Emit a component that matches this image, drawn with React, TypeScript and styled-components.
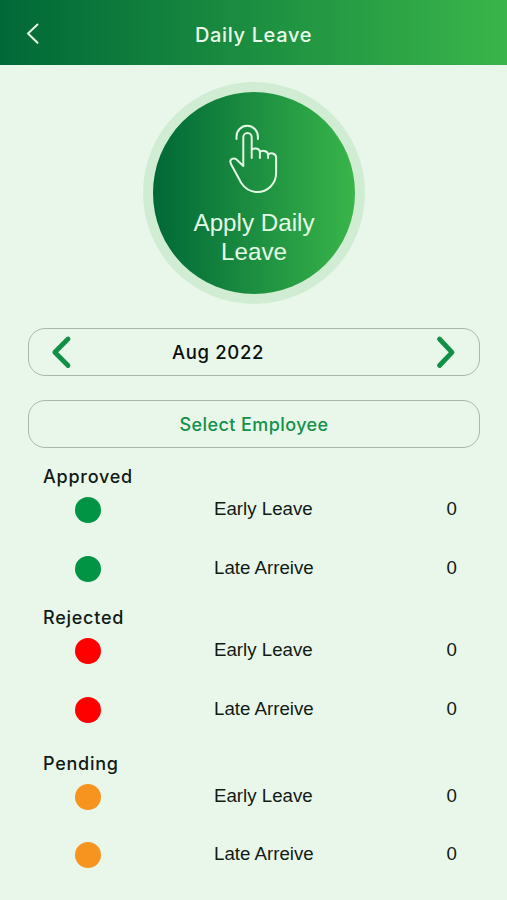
import React from "react";
import styled, { createGlobalStyle } from "styled-components";

const GlobalStyle = createGlobalStyle`
  * { box-sizing: border-box; }
  body { margin: 0; background: #e9f7eb; }
  button { appearance: none; background: none; border: 0; padding: 0; margin: 0; color: inherit; font: inherit; cursor: pointer; }
`;

const brandFont = `Inter, "Noto Sans", sans-serif`;
const bodyFont = `"Liberation Sans", Arial, sans-serif`;

const Screen = styled.main`
  width: 507px;
  height: 900px;
  overflow: hidden;
  display: flex;
  flex-direction: column;
  background: #e9f7eb;
  color: #111a14;
  font-family: ${bodyFont};
`;

const Header = styled.header`
  flex: none;
  height: 65px;
  padding: 3px 26px 0;
  display: grid;
  grid-template-columns: 40px 1fr 40px;
  align-items: center;
  background: linear-gradient(90deg, #006837 0%, #39b54a 100%);
  color: #e9fbe9;
`;

const BackButton = styled.button`
  display: flex;
`;

const Title = styled.h1`
  margin: 0;
  padding-top: 1px;
  text-align: center;
  font: 500 20px/24px ${brandFont};
  letter-spacing: 0.65px;
`;

const ApplyButton = styled.button`
  flex: none;
  align-self: center;
  width: 222px;
  height: 222px;
  margin-top: 17px;
  border-radius: 50%;
  padding: 10px;
  background: #d0edd3;
`;

const ApplyDisc = styled.span`
  width: 100%;
  height: 100%;
  border-radius: 50%;
  padding: 32px 0 0 1px;
  display: flex;
  flex-direction: column;
  align-items: center;
  background: linear-gradient(90deg, #006837 0%, #39b54a 100%);
  color: #e4fbe5;
`;

const ApplyLabel = styled.span`
  width: 140px;
  margin-top: 12px;
  font: 24.2px/29px ${bodyFont};
  text-align: center;
`;

const Controls = styled.section`
  flex: none;
  margin: 24px 27px 0 28px;
  display: flex;
  flex-direction: column;
  gap: 24px;
`;

const MonthPicker = styled.div`
  height: 48px;
  padding: 0 21px;
  display: grid;
  grid-template-columns: 22px 1fr 22px;
  align-items: center;
  border: 1px solid #a9b8ac;
  border-radius: 17px;
  color: #119148;
`;

const ArrowButton = styled.button`
  display: flex;
`;

const Month = styled.span`
  padding-left: 100px;
  color: #0b0f0c;
  font: 500 18.5px/24px ${brandFont};
  letter-spacing: 0.65px;
`;

const EmployeeButton = styled.button`
  height: 48px;
  padding-top: 1px;
  border: 1px solid #a9b8ac;
  border-radius: 17px;
  color: #139149;
  font: 500 18px/24px ${brandFont};
  letter-spacing: 0.42px;
`;

const Summary = styled.section`
  padding: 17.4px 50px 0 43px;
  display: flex;
  flex-direction: column;
`;

const Group = styled.section<{ $gap: number }>`
  margin-bottom: ${({ $gap }) => $gap}px;
`;

const GroupTitle = styled.h2`
  margin: 0;
  height: 32px;
  font: 500 18px/24px ${brandFont};
  letter-spacing: 0.75px;
`;

const Rows = styled.div`
  display: grid;
  gap: 32.4px;
`;

const Row = styled.div`
  height: 26px;
  padding-left: 32px;
  display: grid;
  grid-template-columns: 139px 1fr auto;
  align-items: center;
  font-size: 18.7px;
  line-height: 22px;
`;

const Dot = styled.span<{ $color: string }>`
  width: 26px;
  height: 26px;
  border-radius: 50%;
  background: ${({ $color }) => $color};
`;

const Value = styled.span`
  padding-bottom: 2px;
`;

function TapIcon() {
  return (
    <svg width="50" height="72" viewBox="0 0 50 72" fill="none" stroke="currentColor" strokeWidth="2" strokeLinecap="round" strokeLinejoin="round">
      <path d="M7.5 15V12.5a10.7 10.7 0 0 1 21.4 0V15" />
      <path d="M14.3 42V13.2a4.2 4.2 0 0 1 8.4 0V34M22.7 26c1-2 8-2.500 8.200 2.200V34M30.900 28.200c1.200-2 8-2 8.200 2.400V34M39.100 30.600c2-2.400 8-1.700 8 3V49c0 10.500-8.200 19-19 19-6.500-.2-12-3.200-15.800-9L2.200 40.500C-1 34.500 5.500 33 8.300 36.200L14.300 42" />
    </svg>
  );
}

function Chevron({ next = false }: { next?: boolean }) {
  return (
    <svg width="22" height="34" viewBox="0 0 22 34" fill="none" stroke="currentColor" strokeWidth="4.800" strokeLinecap="round" strokeLinejoin="round">
      <path d={next ? "M3.500 4 16 17.300 3.500 30.500" : "M18 4 4.800 17.300 18 30.500"} />
    </svg>
  );
}

const groups = [
  { title: "Approved", color: "#009444", gap: 24.6, early: 0, late: 0 },
  { title: "Rejected", color: "#fe0000", gap: 28.8, early: 0, late: 0 },
  { title: "Pending", color: "#f7941f", gap: 0, early: 0, late: 0 },
];

export default function App() {
  return (
    <Screen>
      <GlobalStyle />
      <Header>
        <BackButton aria-label="Back">
          <svg width="14" height="22" viewBox="0 0 14 22" fill="none" stroke="currentColor" strokeWidth="2" strokeLinecap="round" strokeLinejoin="round">
            <path d="M11.500 1.500 2 10.500 11.500 19.800" />
          </svg>
        </BackButton>
        <Title>Daily Leave</Title>
      </Header>
      <ApplyButton>
        <ApplyDisc>
          <TapIcon />
          <ApplyLabel>Apply Daily Leave</ApplyLabel>
        </ApplyDisc>
      </ApplyButton>
      <Controls>
        <MonthPicker>
          <ArrowButton aria-label="Previous month"><Chevron /></ArrowButton>
          <Month>Aug 2022</Month>
          <ArrowButton aria-label="Next month"><Chevron next /></ArrowButton>
        </MonthPicker>
        <EmployeeButton>Select Employee</EmployeeButton>
      </Controls>
      <Summary>
        {groups.map((g) => (
          <Group key={g.title} $gap={g.gap}>
            <GroupTitle>{g.title}</GroupTitle>
            <Rows>
              <Row><Dot $color={g.color} /><Value>Early Leave</Value><Value>{g.early}</Value></Row>
              <Row><Dot $color={g.color} /><Value>Late Arreive</Value><Value>{g.late}</Value></Row>
            </Rows>
          </Group>
        ))}
      </Summary>
    </Screen>
  );
}
